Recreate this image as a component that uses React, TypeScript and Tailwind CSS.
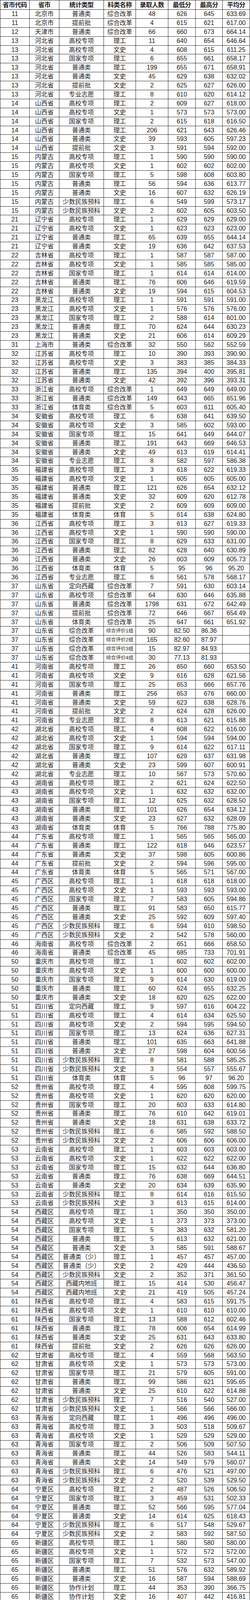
import React from 'react';

// 省市代码, 省市, 统计类型, 科类名称, 录取人数, 最低分, 最高分, 平均分
const rows: string[][] = [
  ['11', '北京市', '普通类', '综合改革', '48', '626', '645', '633.69'],
  ['11', '北京市', '提前批', '综合改革', '4', '615', '621', '617.00'],
  ['12', '天津市', '普通类', '综合改革', '66', '660', '673', '664.14'],
  ['13', '河北省', '高校专项', '理工', '11', '640', '654', '646.64'],
  ['13', '河北省', '高校专项', '文史', '4', '608', '615', '611.25'],
  ['13', '河北省', '国家专项', '理工', '6', '655', '661', '658.17'],
  ['13', '河北省', '普通类', '理工', '199', '655', '671', '658.91'],
  ['13', '河北省', '普通类', '文史', '45', '629', '638', '632.02'],
  ['13', '河北省', '提前批', '文史', '2', '625', '627', '626.00'],
  ['13', '河北省', '专业志愿', '理工', '8', '610', '620', '614.12'],
  ['14', '山西省', '高校专项', '理工', '2', '609', '627', '618.00'],
  ['14', '山西省', '高校专项', '文史', '1', '573', '573', '573.00'],
  ['14', '山西省', '国家专项', '理工', '2', '615', '618', '616.50'],
  ['14', '山西省', '普通类', '理工', '206', '621', '643', '626.46'],
  ['14', '山西省', '普通类', '文史', '39', '593', '605', '597.23'],
  ['14', '山西省', '提前批', '文史', '3', '591', '594', '592.00'],
  ['15', '内蒙古', '高校专项', '理工', '1', '590', '590', '590.00'],
  ['15', '内蒙古', '高校专项', '文史', '1', '602', '602', '602.00'],
  ['15', '内蒙古', '国家专项', '理工', '5', '598', '608', '603.80'],
  ['15', '内蒙古', '普通类', '理工', '56', '594', '636', '613.77'],
  ['15', '内蒙古', '普通类', '文史', '16', '607', '632', '626.19'],
  ['15', '内蒙古', '少数民族预科', '理工', '6', '549', '599', '573.17'],
  ['15', '内蒙古', '少数民族预科', '文史', '2', '602', '605', '603.50'],
  ['21', '辽宁省', '高校专项', '理工', '1', '629', '629', '629.00'],
  ['21', '辽宁省', '高校专项', '文史', '1', '623', '623', '623.00'],
  ['21', '辽宁省', '普通类', '理工', '65', '639', '655', '644.14'],
  ['21', '辽宁省', '普通类', '文史', '19', '636', '642', '637.53'],
  ['22', '吉林省', '高校专项', '理工', '1', '587', '587', '587.00'],
  ['22', '吉林省', '高校专项', '文史', '1', '585', '585', '585.00'],
  ['22', '吉林省', '国家专项', '理工', '1', '614', '614', '614.00'],
  ['22', '吉林省', '普通类', '理工', '76', '606', '646', '619.59'],
  ['22', '吉林省', '普通类', '文史', '19', '594', '615', '604.53'],
  ['23', '黑龙江', '高校专项', '理工', '1', '591', '591', '591.00'],
  ['23', '黑龙江', '高校专项', '文史', '1', '576', '576', '576.00'],
  ['23', '黑龙江', '国家专项', '理工', '2', '588', '614', '601.00'],
  ['23', '黑龙江', '普通类', '理工', '70', '624', '644', '630.23'],
  ['23', '黑龙江', '普通类', '文史', '21', '606', '614', '609.29'],
  ['31', '上海市', '普通类', '综合改革', '32', '550', '562', '552.59'],
  ['32', '江苏省', '高校专项', '理工', '10', '390', '393', '390.90'],
  ['32', '江苏省', '高校专项', '文史', '3', '383', '385', '384.33'],
  ['32', '江苏省', '普通类', '理工', '135', '394', '400', '395.81'],
  ['32', '江苏省', '普通类', '文史', '42', '392', '396', '393.31'],
  ['33', '浙江省', '高校专项', '综合改革', '1', '649', '649', '649.00'],
  ['33', '浙江省', '普通类', '综合改革', '149', '643', '665', '651.96'],
  ['33', '浙江省', '体育类', '综合改革', '5', '603', '611', '605.40'],
  ['34', '安徽省', '高校专项', '理工', '6', '638', '641', '639.50'],
  ['34', '安徽省', '高校专项', '文史', '3', '585', '602', '593.00'],
  ['34', '安徽省', '国家专项', '理工', '15', '641', '649', '644.07'],
  ['34', '安徽省', '普通类', '理工', '191', '643', '669', '646.53'],
  ['34', '安徽省', '普通类', '文史', '49', '613', '619', '614.41'],
  ['34', '安徽省', '专业志愿', '理工', '8', '582', '597', '586.38'],
  ['35', '福建省', '高校专项', '理工', '3', '618', '622', '619.33'],
  ['35', '福建省', '高校专项', '文史', '1', '605', '605', '605.00'],
  ['35', '福建省', '普通类', '理工', '121', '626', '654', '632.12'],
  ['35', '福建省', '普通类', '文史', '32', '609', '620', '612.78'],
  ['35', '福建省', '提前批', '文史', '2', '609', '609', '609.00'],
  ['35', '福建省', '体育类', '体育', '5', '614', '638', '624.80'],
  ['36', '江西省', '高校专项', '理工', '3', '613', '627', '619.33'],
  ['36', '江西省', '高校专项', '文史', '1', '590', '590', '590.00'],
  ['36', '江西省', '国家专项', '理工', '8', '629', '633', '631.00'],
  ['36', '江西省', '普通类', '理工', '82', '628', '640', '630.89'],
  ['36', '江西省', '普通类', '文史', '26', '603', '609', '605.73'],
  ['36', '江西省', '体育类', '体育', '5', '95', '96', '95.20'],
  ['36', '江西省', '专业志愿', '理工', '6', '561', '578', '568.17'],
  ['37', '山东省', '定向西藏', '综合改革', '7', '591', '630', '603.14'],
  ['37', '山东省', '高校专项', '综合改革', '64', '630', '646', '635.88'],
  ['37', '山东省', '普通类', '综合改革', '1798', '631', '672', '642.49'],
  ['37', '山东省', '提前批', '综合改革', '72', '646', '667', '654.49'],
  ['37', '山东省', '体育类', '综合改革', '25', '647', '661', '651.92'],
  ['37', '山东省', '综合改革', '综合评价1组', '90', '82.50', '86.36', ''],
  ['37', '山东省', '综合改革', '综合评价2组', '165', '82.60', '87.97', ''],
  ['37', '山东省', '综合改革', '综合评价3组', '15', '82.97', '84.93', ''],
  ['37', '山东省', '综合改革', '综合评价4组', '30', '77.13', '81.93', ''],
  ['41', '河南省', '高校专项', '理工', '26', '650', '660', '653.50'],
  ['41', '河南省', '高校专项', '文史', '9', '616', '628', '621.56'],
  ['41', '河南省', '国家专项', '理工', '25', '653', '666', '657.76'],
  ['41', '河南省', '普通类', '理工', '256', '653', '676', '660.00'],
  ['41', '河南省', '普通类', '文史', '59', '623', '638', '628.76'],
  ['41', '河南省', '提前批', '文史', '2', '624', '628', '626.00'],
  ['41', '河南省', '专业志愿', '理工', '8', '613', '621', '615.88'],
  ['42', '湖北省', '高校专项', '理工', '4', '608', '622', '616.00'],
  ['42', '湖北省', '高校专项', '文史', '1', '594', '594', '594.00'],
  ['42', '湖北省', '国家专项', '理工', '9', '614', '622', '617.11'],
  ['42', '湖北省', '普通类', '理工', '107', '629', '637', '631.98'],
  ['42', '湖北省', '普通类', '文史', '23', '599', '607', '600.91'],
  ['42', '湖北省', '专业志愿', '理工', '10', '567', '573', '570.60'],
  ['43', '湖南省', '高校专项', '理工', '2', '621', '624', '622.50'],
  ['43', '湖南省', '高校专项', '文史', '1', '632', '632', '632.00'],
  ['43', '湖南省', '国家专项', '理工', '12', '625', '632', '628.50'],
  ['43', '湖南省', '普通类', '理工', '101', '626', '654', '634.12'],
  ['43', '湖南省', '普通类', '文史', '23', '627', '632', '628.09'],
  ['43', '湖南省', '体育类', '体育', '5', '766', '788', '775.80'],
  ['44', '广东省', '高校专项', '理工', '1', '565', '565', '565.00'],
  ['44', '广东省', '普通类', '理工', '122', '618', '646', '623.57'],
  ['44', '广东省', '普通类', '文史', '37', '598', '605', '600.86'],
  ['44', '广东省', '提前批', '文史', '2', '594', '596', '595.00'],
  ['44', '广东省', '体育类', '体育', '5', '565', '571', '567.00'],
  ['45', '广西区', '高校专项', '理工', '1', '618', '618', '618.00'],
  ['45', '广西区', '高校专项', '文史', '1', '593', '593', '593.00'],
  ['45', '广西区', '国家专项', '理工', '7', '583', '605', '594.86'],
  ['45', '广西区', '普通类', '理工', '91', '583', '650', '615.77'],
  ['45', '广西区', '普通类', '文史', '25', '592', '609', '597.40'],
  ['45', '广西区', '少数民族预科', '理工', '6', '594', '610', '598.50'],
  ['45', '广西区', '少数民族预科', '文史', '2', '542', '578', '560.00'],
  ['46', '海南省', '高校专项', '综合改革', '2', '651', '666', '658.50'],
  ['46', '海南省', '普通类', '综合改革', '45', '685', '733', '701.91'],
  ['50', '重庆市', '高校专项', '理工', '1', '602', '602', '602.00'],
  ['50', '重庆市', '高校专项', '文史', '1', '600', '600', '600.00'],
  ['50', '重庆市', '国家专项', '理工', '9', '614', '630', '619.00'],
  ['50', '重庆市', '普通类', '理工', '60', '624', '655', '632.25'],
  ['50', '重庆市', '普通类', '文史', '18', '620', '625', '622.00'],
  ['51', '四川省', '定向西藏', '理工', '9', '597', '616', '604.22'],
  ['51', '四川省', '高校专项', '理工', '4', '614', '634', '625.50'],
  ['51', '四川省', '高校专项', '文史', '2', '594', '595', '594.50'],
  ['51', '四川省', '国家专项', '理工', '13', '624', '636', '627.31'],
  ['51', '四川省', '普通类', '理工', '101', '635', '663', '641.88'],
  ['51', '四川省', '普通类', '文史', '27', '598', '604', '600.56'],
  ['51', '四川省', '少数民族预科', '理工', '8', '581', '588', '585.25'],
  ['51', '四川省', '少数民族预科', '文史', '3', '554', '557', '555.67'],
  ['51', '四川省', '体育类', '体育', '5', '96', '97', '96.20'],
  ['52', '贵州省', '高校专项', '理工', '4', '595', '608', '599.75'],
  ['52', '贵州省', '高校专项', '文史', '1', '620', '620', '620.00'],
  ['52', '贵州省', '国家专项', '理工', '20', '603', '633', '614.80'],
  ['52', '贵州省', '普通类', '理工', '76', '610', '642', '619.01'],
  ['52', '贵州省', '普通类', '文史', '18', '631', '638', '633.72'],
  ['52', '贵州省', '少数民族预科', '理工', '6', '585', '592', '588.50'],
  ['52', '贵州省', '少数民族预科', '文史', '2', '606', '606', '606.00'],
  ['53', '云南省', '高校专项', '理工', '1', '603', '603', '603.00'],
  ['53', '云南省', '高校专项', '文史', '1', '622', '622', '622.00'],
  ['53', '云南省', '国家专项', '理工', '15', '632', '644', '636.80'],
  ['53', '云南省', '普通类', '理工', '76', '638', '669', '644.51'],
  ['53', '云南省', '普通类', '文史', '20', '634', '639', '635.90'],
  ['53', '云南省', '少数民族预科', '理工', '8', '614', '616', '615.50'],
  ['53', '云南省', '少数民族预科', '文史', '3', '613', '615', '614.00'],
  ['54', '西藏区', '高校专项', '理工', '1', '350', '350', '350.00'],
  ['54', '西藏区', '高校专项', '文史', '1', '373', '373', '373.00'],
  ['54', '西藏区', '国家专项', '理工', '5', '383', '632', '581.20'],
  ['54', '西藏区', '普通类', '理工', '5', '613', '632', '621.00'],
  ['54', '西藏区', '普通类', '文史', '3', '585', '591', '588.67'],
  ['54', '西藏区', '普通类（少）', '理工', '1', '457', '457', '457.00'],
  ['54', '西藏区', '普通类（少）', '文史', '2', '429', '444', '436.50'],
  ['54', '西藏区', '少数民族预科', '文史', '2', '352', '371', '361.50'],
  ['54', '西藏区', '西藏内地班', '理工', '15', '414', '530', '456.47'],
  ['54', '西藏区', '西藏内地班', '文史', '21', '419', '505', '457.24'],
  ['61', '陕西省', '高校专项', '理工', '4', '583', '615', '591.75'],
  ['61', '陕西省', '高校专项', '文史', '1', '610', '610', '610.00'],
  ['61', '陕西省', '国家专项', '理工', '13', '588', '612', '602.46'],
  ['61', '陕西省', '普通类', '理工', '78', '606', '654', '614.99'],
  ['61', '陕西省', '普通类', '文史', '25', '631', '643', '633.80'],
  ['61', '陕西省', '提前批', '文史', '2', '626', '626', '626.00'],
  ['62', '甘肃省', '高校专项', '理工', '4', '559', '568', '563.50'],
  ['62', '甘肃省', '高校专项', '文史', '1', '573', '573', '573.00'],
  ['62', '甘肃省', '国家专项', '理工', '21', '579', '605', '591.00'],
  ['62', '甘肃省', '普通类', '理工', '99', '586', '621', '595.65'],
  ['62', '甘肃省', '普通类', '文史', '25', '610', '622', '614.88'],
  ['62', '甘肃省', '少数民族预科', '理工', '7', '516', '540', '527.00'],
  ['62', '甘肃省', '少数民族预科', '文史', '1', '566', '566', '566.00'],
  ['63', '青海省', '定向西藏', '理工', '1', '496', '496', '496.00'],
  ['63', '青海省', '高校专项', '理工', '3', '503', '518', '509.67'],
  ['63', '青海省', '高校专项', '文史', '1', '529', '529', '529.00'],
  ['63', '青海省', '国家专项', '理工', '2', '506', '509', '507.50'],
  ['63', '青海省', '普通类', '理工', '44', '526', '583', '544.11'],
  ['63', '青海省', '普通类', '文史', '14', '549', '579', '560.07'],
  ['63', '青海省', '少数民族预科', '理工', '6', '476', '521', '497.00'],
  ['63', '青海省', '少数民族预科', '文史', '2', '520', '539', '529.50'],
  ['64', '宁夏区', '高校专项', '理工', '2', '487', '526', '506.50'],
  ['64', '宁夏区', '国家专项', '理工', '3', '459', '531', '502.33'],
  ['64', '宁夏区', '普通类', '理工', '52', '566', '595', '577.04'],
  ['64', '宁夏区', '普通类', '文史', '14', '614', '625', '618.43'],
  ['64', '宁夏区', '少数民族预科', '理工', '6', '517', '548', '529.67'],
  ['64', '宁夏区', '少数民族预科', '文史', '2', '583', '592', '587.50'],
  ['65', '新疆区', '高校专项', '理工', '1', '580', '580', '580.00'],
  ['65', '新疆区', '高校专项', '文史', '1', '572', '572', '572.00'],
  ['65', '新疆区', '国家专项', '理工', '7', '532', '573', '547.00'],
  ['65', '新疆区', '普通类', '理工', '51', '576', '632', '589.92'],
  ['65', '新疆区', '普通类', '文史', '16', '587', '594', '588.69'],
  ['65', '新疆区', '协作计划', '理工', '44', '353', '390', '366.75'],
  ['65', '新疆区', '协作计划', '文史', '16', '407', '442', '416.81'],
  ['65', '新疆区', '新疆内地班', '理工', '28', '530', '632', '567.46'],
  ['65', '新疆区', '新疆内地班', '文史', '6', '465', '590', '555.17'],
  ['99', '港澳台侨', '联招', '理工', '22', '534', '583', '550.18'],
  ['99', '港澳台侨', '联招', '文史', '28', '483', '587', '560.64'],
];

const headers = ['省市代码', '省市', '统计类型', '科类名称', '录取人数', '最低分', '最高分', '平均分'];

const cols = ['w-[76px]', 'w-[76px]', 'w-[114px]', 'w-[82px]', 'w-[83px]', 'w-[70px]', 'w-[69px]', 'w-[70px]'];
const cell = 'shrink-0 h-full flex items-center justify-center border-r border-[#2a2a2a] whitespace-nowrap overflow-hidden leading-none';

export default function App() {
  return (
    <div className="relative w-[640px] h-[4191px] overflow-hidden bg-white text-[#1c1c1c] font-['Liberation_Sans','Noto_Sans_CJK_SC',sans-serif]">
      <div className="flex flex-col border-t border-[#2a2a2a]">
        <div className="flex h-[24px] shrink-0 border-b border-[#2a2a2a]">
          {headers.map((h, j) => (
            <div key={h} className={`${cell} ${cols[j]} ${j === 0 ? 'border-l' : ''} text-[16px] font-bold tracking-[-0.5px]`}>
              {h}
            </div>
          ))}
        </div>

        {rows.map((r, i) => (
          <div key={i} className="flex h-[22.9px] shrink-0 border-b border-[#2a2a2a] overflow-hidden">
            {r.map((v, j) => (
              <div
                key={j}
                className={`${cell} ${cols[j]} ${j === 0 ? 'border-l' : ''} ${j === 3 && v.startsWith('综合评价') ? 'text-[12.5px]' : 'text-[16px]'} ${j === 1 && v.length === 4 ? 'tracking-[-0.5px]' : ''}`}
              >
                {v}
              </div>
            ))}
          </div>
        ))}
      </div>

      {/* 水印 */}
      <div className="absolute right-[4px] bottom-[6px] text-[17px] font-bold text-white [text-shadow:0_0_2px_#000,0_0_2px_#000,1px_1px_1px_#000]">
        搜狐号@史海新编
      </div>
    </div>
  );
}
